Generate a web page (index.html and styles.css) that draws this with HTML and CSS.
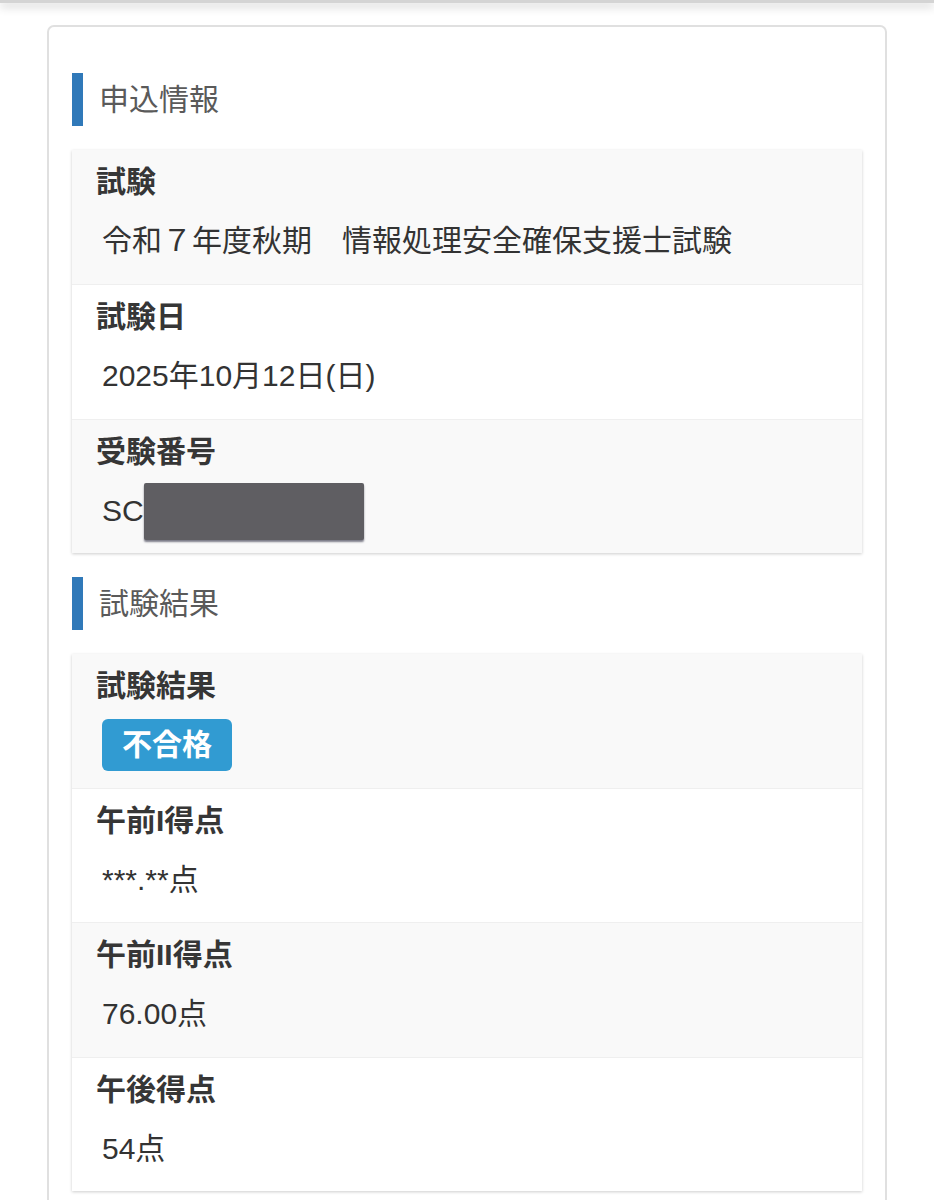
FILE: index.html
```html
<!DOCTYPE html>
<html lang="ja">
<head>
<meta charset="utf-8">
<link rel="stylesheet" href="styles.css">
</head>
<body>
<div class="topbar"></div>
<div class="panel">
  <h2 class="sec-head">申込情報</h2>
  <div class="card">
    <div class="row">
      <div class="label">試験</div>
      <div class="value">令和７年度秋期　情報処理安全確保支援士試験</div>
    </div>
    <div class="row">
      <div class="label">試験日</div>
      <div class="value">2025年10月12日(日)</div>
    </div>
    <div class="row">
      <div class="label">受験番号</div>
      <div class="value redact-wrap">SC<span class="redact"></span></div>
    </div>
  </div>

  <h2 class="sec-head">試験結果</h2>
  <div class="card">
    <div class="row">
      <div class="label">試験結果</div>
      <div class="value badge-wrap"><span class="badge">不合格</span></div>
    </div>
    <div class="row">
      <div class="label">午前I得点</div>
      <div class="value">***.**点</div>
    </div>
    <div class="row">
      <div class="label">午前II得点</div>
      <div class="value">76.00点</div>
    </div>
    <div class="row">
      <div class="label">午後得点</div>
      <div class="value">54点</div>
    </div>
  </div>
</div>
</body>
</html>
```

FILE: styles.css
```css
html, body {
  margin: 0;
  padding: 0;
  background: #fff;
}
body {
  font-family: "Liberation Sans", "Noto Sans CJK JP", sans-serif;
  color: #333;
}
.topbar {
  height: 3px;
  background: #d4d4d4;
  box-shadow: 0 3px 10px rgba(0, 0, 0, 0.3);
}
.panel {
  margin: 22px 0 0 47px;
  width: 840px;
  border: 2px solid #e0e0e0;
  border-radius: 7px;
  padding: 46px 23px 40px 23px;
  box-sizing: border-box;
}
.sec-head {
  margin: 0 0 24px 0;
  height: 53px;
  border-left: 11px solid #3079b9;
  padding-left: 16px;
  font-size: 30px;
  font-weight: 400;
  line-height: 53px;
  color: #5a5a5a;
}
.card {
  background: #fff;
  box-shadow: 0 1px 3px rgba(0, 0, 0, 0.2);
  margin-bottom: 24px;
}
.row {
  height: 134.3px;
  box-sizing: border-box;
  padding: 14px 25px 0 24px;
}
.row:nth-child(odd) {
  background: #f9f9f9;
}
.row + .row {
  border-top: 1px solid #efefef;
}
.label {
  font-size: 30px;
  font-weight: 700;
  line-height: 36px;
  color: #363636;
}
.value {
  margin-top: 23px;
  padding-left: 6px;
  font-size: 30px;
  line-height: 36px;
  color: #333;
}
.redact-wrap {
  position: relative;
}
.redact {
  position: absolute;
  left: 48px;
  top: -10px;
  width: 220px;
  height: 57px;
  background: #5f5e62;
  border-radius: 2px;
  box-shadow: 0 2px 2px rgba(40, 40, 60, 0.6);
}
.badge-wrap {
  margin-top: 15px;
  padding-left: 6px;
}
.badge {
  display: inline-block;
  height: 52px;
  line-height: 52px;
  padding: 0 20px 0 20px;
  background: #319bd2;
  color: #fff;
  font-weight: 700;
  font-size: 30px;
  border-radius: 6px;
}
```
